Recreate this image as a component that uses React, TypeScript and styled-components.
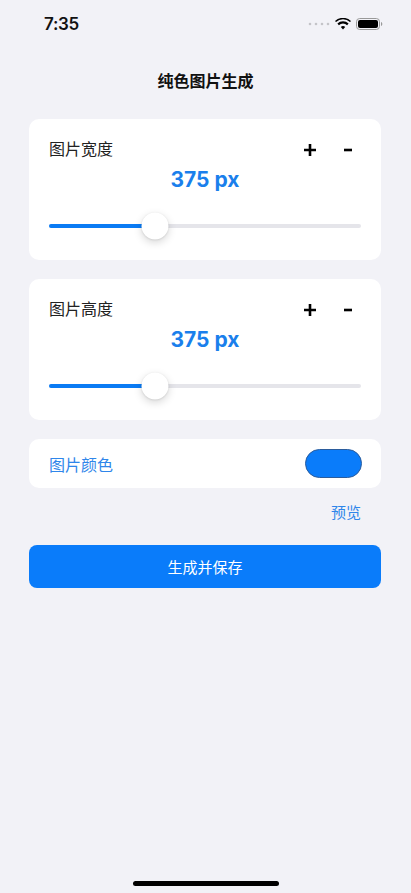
import React, { useState } from "react";
import styled, { createGlobalStyle } from "styled-components";

const GlobalStyle = createGlobalStyle`
  html, body {
    margin: 0;
    padding: 0;
    background: #f2f2f7;
  }
  body {
    font-family: "Inter", "Noto Sans CJK SC", "Noto Sans", sans-serif;
    -webkit-font-smoothing: antialiased;
  }
  * { box-sizing: border-box; }
`;

const Screen = styled.div`
  width: 411px;
  min-height: 893px;
  display: flex;
  flex-direction: column;
  background: #f2f2f7;
`;

const StatusBar = styled.div`
  height: 47px;
  display: flex;
  align-items: center;
  justify-content: space-between;
  padding: 0 28px 0 44px;
`;

const Clock = styled.span`
  font-family: "Inter", "Noto Sans", sans-serif;
  font-size: 17px;
  font-weight: 600;
  color: #111;
  letter-spacing: -0.3px;
`;

const StatusIcons = styled.div`
  display: flex;
  align-items: center;
  gap: 5px;
`;

const Header = styled.div`
  height: 64px;
  display: flex;
  align-items: center;
  justify-content: center;
`;

const Title = styled.h1`
  margin: 0;
  margin-top: 1px;
  font-family: "Noto Sans CJK SC", sans-serif;
  font-size: 16px;
  font-weight: 600;
  color: #111;
`;

const Content = styled.div`
  padding: 8px 30px 0 29px;
  display: flex;
  flex-direction: column;
`;

const Card = styled.div<{ $gap?: number }>`
  background: #fff;
  border-radius: 10px;
  margin-bottom: ${(p) => p.$gap ?? 19}px;
`;

const SizeCard = styled(Card)`
  padding: 18px 20px 20px 20px;
  display: flex;
  flex-direction: column;
`;

const LabelRow = styled.div`
  display: flex;
  align-items: center;
  justify-content: space-between;
  height: 22px;
`;

const Label = styled.span<{ $blue?: boolean }>`
  font-family: "Noto Sans CJK SC", sans-serif;
  font-size: 16px;
  color: ${(p) => (p.$blue ? "#2f86ea" : "#222")};
`;

const Steppers = styled.div`
  display: flex;
  align-items: center;
  gap: 22px;
  margin-top: 4px;
  margin-right: 5px;
`;

const StepButton = styled.button`
  border: none;
  background: none;
  padding: 0;
  width: 16px;
  height: 16px;
  display: flex;
  align-items: center;
  justify-content: center;
  cursor: pointer;
`;

const Value = styled.div`
  margin-top: 8px;
  text-align: center;
  font-family: "Inter", "Noto Sans", sans-serif;
  font-size: 21px;
  line-height: 26px;
  font-weight: 700;
  color: #1a7fec;
`;

const SliderBox = styled.div`
  margin-top: 19px;
  height: 28px;
  position: relative;
  display: flex;
  align-items: center;
`;

const Track = styled.div`
  width: 100%;
  height: 4px;
  border-radius: 2px;
  background: #e5e5ea;
  position: relative;
`;

const Fill = styled.div`
  height: 100%;
  border-radius: 2px;
  background: #0a7bf4;
`;

const Thumb = styled.div`
  position: absolute;
  top: 50%;
  width: 27px;
  height: 27px;
  border-radius: 50%;
  background: #fff;
  transform: translate(-50%, -50%);
  box-shadow: 0 3px 8px rgba(0, 0, 0, 0.16), 0 0.5px 2px rgba(0, 0, 0, 0.12);
`;

const ColorCard = styled(Card)`
  height: 49px;
  padding: 0 19px 0 20px;
  display: flex;
  align-items: center;
  justify-content: space-between;
  margin-bottom: 0;
`;

const ColorSwatch = styled.div<{ $color: string }>`
  width: 57px;
  height: 29px;
  border-radius: 15px;
  background: ${(p) => p.$color};
  border: 1px solid #2b5c9c;
`;

const PreviewRow = styled.div`
  display: flex;
  justify-content: flex-end;
  padding: 13px 20px 0 0;
  height: 57px;
`;

const PreviewLink = styled.span`
  font-family: "Noto Sans CJK SC", sans-serif;
  font-size: 15px;
  color: #2f86ea;
`;

const PrimaryButton = styled.button`
  height: 43px;
  width: 100%;
  border: none;
  border-radius: 8px;
  background: #0a7cfa;
  color: #fff;
  font-family: "Noto Sans CJK SC", sans-serif;
  font-size: 15px;
  cursor: pointer;
`;

const Spacer = styled.div`
  flex: 1;
`;

const HomeBar = styled.div`
  align-self: center;
  width: 146px;
  height: 5px;
  border-radius: 3px;
  background: #000;
  margin: 0 0 7px 0;
`;

const Plus = () => (
  <svg width="14" height="14" viewBox="0 0 14 14">
    <path d="M7 1v12M1 7h12" stroke="#000" strokeWidth="2.6" />
  </svg>
);

const Minus = () => (
  <svg width="10" height="14" viewBox="0 0 10 14">
    <path d="M1 7h8" stroke="#000" strokeWidth="2.6" />
  </svg>
);

const Wifi = () => (
  <svg width="16" height="12" viewBox="0 0 16 12">
    <path d="M8 11.5l2.2-2.4a3.2 3.2 0 0 0-4.4 0z" fill="#000" />
    <path d="M3.9 7.2a5.8 5.8 0 0 1 8.2 0l1.5-1.6a8 8 0 0 0-11.2 0z" fill="#000" />
    <path d="M1 4.1a10 10 0 0 1 14 0l1-1.1a11.6 11.6 0 0 0-16 0z" fill="#000" />
  </svg>
);

const Battery = () => (
  <svg width="27" height="12" viewBox="0 0 27 12">
    <rect x="0.5" y="0.5" width="23" height="11" rx="3.2" fill="none" stroke="#999" />
    <rect x="2" y="2" width="20" height="8" rx="2" fill="#000" />
    <path d="M25 4v4c0.8-0.3 1.3-1 1.3-2s-0.5-1.7-1.3-2z" fill="#999" />
  </svg>
);

const Dots = () => (
  <svg width="22" height="4" viewBox="0 0 22 4">
    {[2, 8, 14, 20].map((x) => (
      <circle key={x} cx={x} cy="2" r="1.3" fill="#c4c4c8" />
    ))}
  </svg>
);

const MIN = 0;
const MAX = 1100;

function SizeControl({ label, value, onChange }: { label: string; value: number; onChange: (v: number) => void }) {
  const pct = ((value - MIN) / (MAX - MIN)) * 100;
  return (
    <SizeCard>
      <LabelRow>
        <Label>{label}</Label>
        <Steppers>
          <StepButton aria-label="plus" onClick={() => onChange(Math.min(MAX, value + 1))}>
            <Plus />
          </StepButton>
          <StepButton aria-label="minus" onClick={() => onChange(Math.max(MIN, value - 1))}>
            <Minus />
          </StepButton>
        </Steppers>
      </LabelRow>
      <Value>{value} px</Value>
      <SliderBox>
        <Track>
          <Fill style={{ width: `${pct}%` }} />
        </Track>
        <Thumb style={{ left: `${pct}%` }} />
      </SliderBox>
    </SizeCard>
  );
}

export default function App() {
  const [width, setWidth] = useState(375);
  const [height, setHeight] = useState(375);
  return (
    <>
      <GlobalStyle />
      <Screen>
        <StatusBar>
          <Clock>7:35</Clock>
          <StatusIcons>
            <Dots />
            <Wifi />
            <Battery />
          </StatusIcons>
        </StatusBar>
        <Header>
          <Title>纯色图片生成</Title>
        </Header>
        <Content>
          <SizeControl label="图片宽度" value={width} onChange={setWidth} />
          <SizeControl label="图片高度" value={height} onChange={setHeight} />
          <ColorCard>
            <Label $blue>图片颜色</Label>
            <ColorSwatch $color="#0a7cfa" />
          </ColorCard>
          <PreviewRow>
            <PreviewLink>预览</PreviewLink>
          </PreviewRow>
          <PrimaryButton>生成并保存</PrimaryButton>
        </Content>
        <Spacer />
        <HomeBar />
      </Screen>
    </>
  );
}
